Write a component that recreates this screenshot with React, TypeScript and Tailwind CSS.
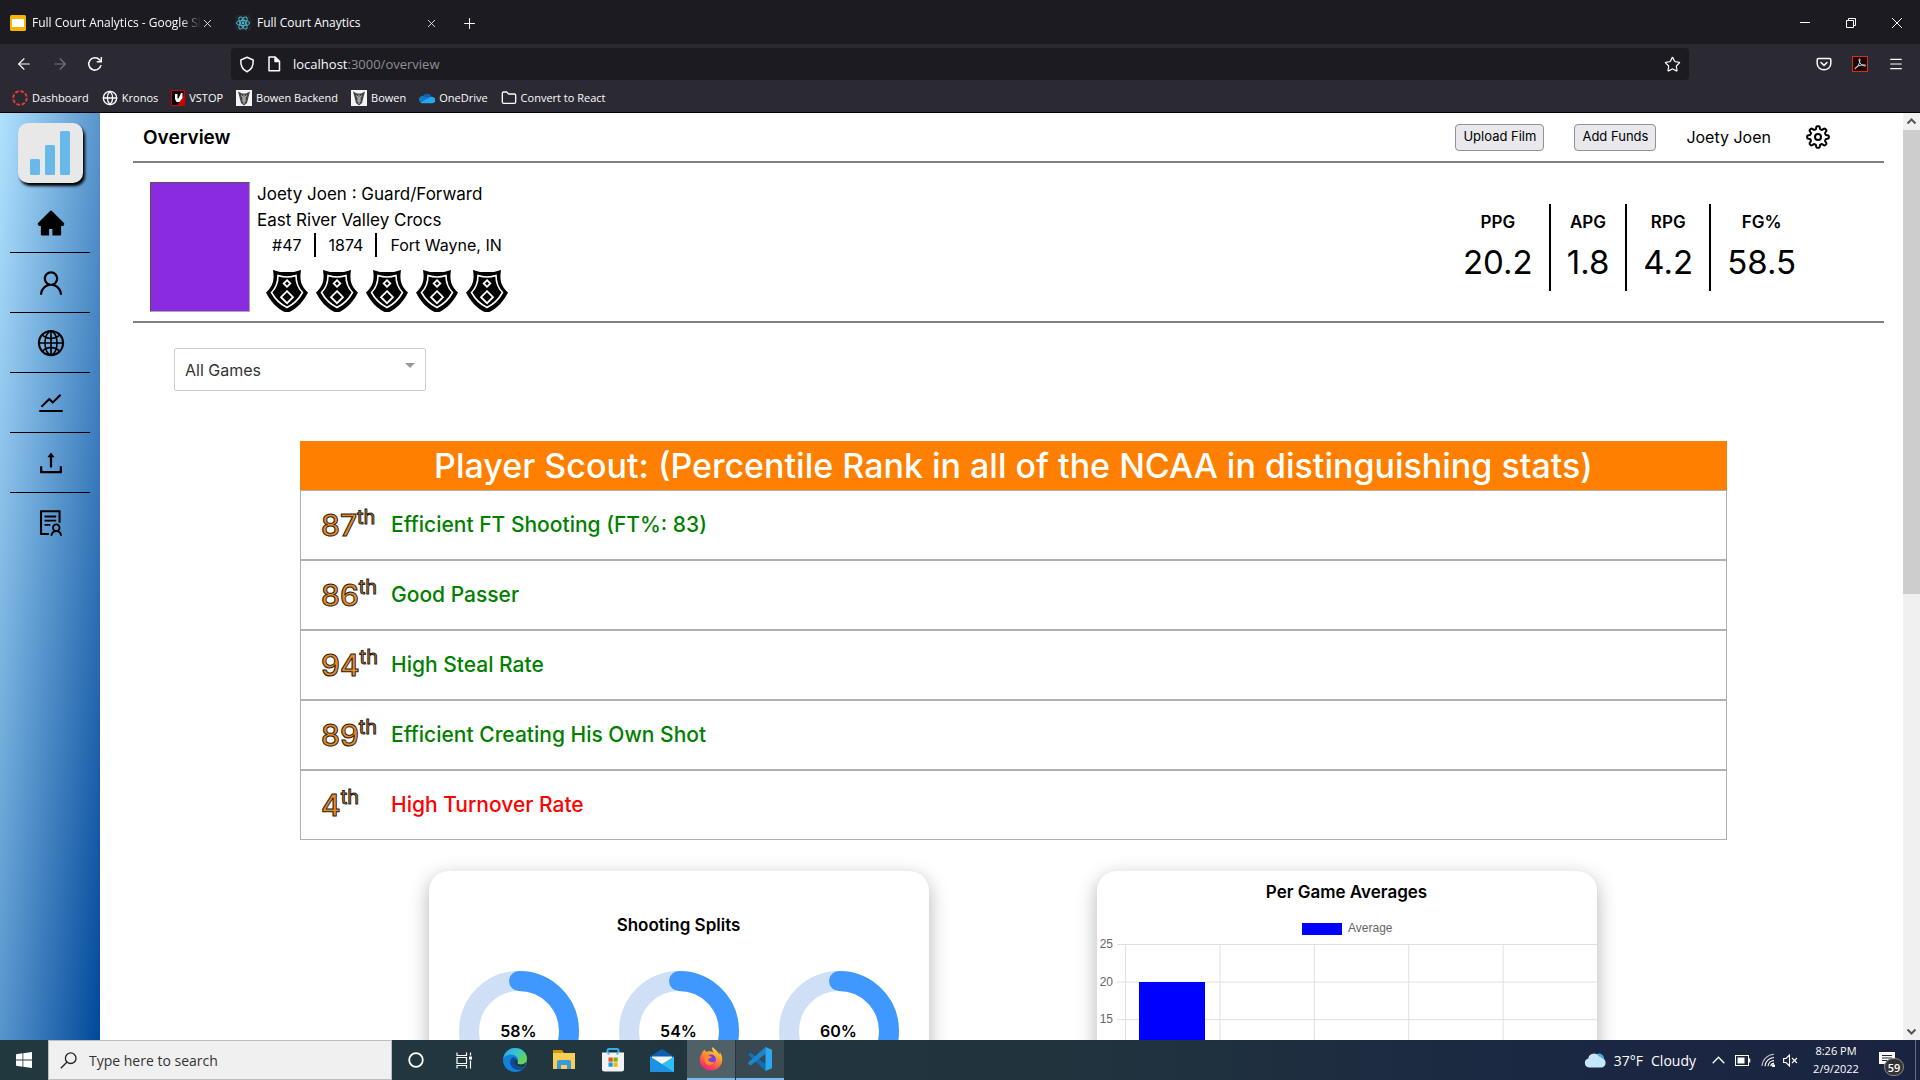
import React from "react";
import {
  AiFillHome,
  AiOutlineUser,
  AiOutlineGlobal,
  AiOutlineStock,
  AiOutlineUpload,
  AiOutlineSolution,
} from "react-icons/ai";
import { ArrowLeft, ArrowRight, X, Plus, Globe, Folder, Star, Menu } from "lucide-react";

/* ---------- Browser chrome icons ---------- */

const SlidesIcon = () => (
  <svg width="16" height="16" viewBox="0 0 16 16" className="shrink-0">
    <rect width="16" height="16" rx="1.5" fill="#f5b400" />
    <rect x="2" y="4" width="12" height="8" fill="#fff" />
  </svg>
);

const ReactLogo = () => (
  <svg width="16" height="16" viewBox="0 0 16 16" className="shrink-0">
    <rect width="16" height="16" rx="2" fill="#20272b" />
    <g fill="none" stroke="#4fb3ca" strokeWidth="1">
      <ellipse cx="8" cy="8" rx="6.6" ry="2.6" />
      <ellipse cx="8" cy="8" rx="6.6" ry="2.6" transform="rotate(60 8 8)" />
      <ellipse cx="8" cy="8" rx="6.6" ry="2.6" transform="rotate(120 8 8)" />
    </g>
    <circle cx="8" cy="8" r="1.4" fill="#4fb3ca" />
  </svg>
);

const ReloadIcon = () => (
  <svg width="16" height="16" viewBox="0 0 16 16" fill="none" stroke="currentColor" strokeWidth="1.5">
    <path d="M14 9.2A6.2 6.2 0 1 1 12.6 3.8L14 5.4" />
    <path d="M14.3 1v4.7H9.8" />
  </svg>
);

const ShieldIcon = () => (
  <svg width="16" height="17" viewBox="0 0 16 17" fill="none" stroke="currentColor" strokeWidth="1.5" strokeLinejoin="round">
    <path d="M8 1.2 14.2 4c.3 5.400-1.700 9.700-6.200 11.800C3.500 13.700 1.500 9.400 1.800 4Z" />
  </svg>
);

const PageIcon = () => (
  <svg width="14" height="16" viewBox="0 0 14 16" fill="none" stroke="currentColor" strokeWidth="1.5" strokeLinejoin="round">
    <path d="M2 1h6.200L12.500 5.300V14.800H2Z" />
    <path d="M8 1v4.500h4.500" fill="currentColor" />
  </svg>
);

const PocketIcon = () => (
  <svg width="16" height="16" viewBox="0 0 16 16" fill="none" stroke="currentColor" strokeWidth="1.500" strokeLinecap="round" strokeLinejoin="round">
    <path d="M2.500 2.500h11a1.300 1.300 0 0 1 1.300 1.300V7.500a6.800 6.300 0 0 1-13.600 0V3.800a1.300 1.300 0 0 1 1.300-1.300Z" />
    <path d="m5 6.500 3 2.900 3-2.900" />
  </svg>
);

const AcrobatIcon = () => (
  <svg width="16" height="16" viewBox="0 0 16 16">
    <rect x=".5" y=".5" width="15" height="15" fill="#1a0404" stroke="#e02a10" />
    <path d="M3 13c2-1 5-6 5-9.500 0-1-1.200-1-1 .3C7.400 7 10 10 13 10c1.200-.2.500-1.300-1.500-1.200C8.500 9 5 10 3.200 12.200Z" fill="none" stroke="#ddd" strokeWidth="1" />
  </svg>
);

const CanvasIcon = () => (
  <svg width="16" height="16" viewBox="0 0 16 16" className="shrink-0">
    <circle cx="8" cy="8" r="6.800" fill="none" stroke="#e03c31" strokeWidth="2" strokeDasharray="3.700 1.640" />
  </svg>
);

const VstopIcon = () => (
  <svg width="14" height="16" viewBox="0 0 14 16" className="shrink-0">
    <rect width="14" height="16" fill="#c00" />
    <path d="M1 1h11.500v4L7 15H1Z" fill="#000" />
    <path d="M4 4h2.500v4.500h1L10 3h1.500v5L8.500 12H5.500L4 9Z" fill="#fff" />
  </svg>
);

const BowenIcon = () => (
  <svg width="16" height="16" viewBox="0 0 16 16" className="shrink-0">
    <rect width="16" height="16" fill="#f4f4f4" />
    <path d="M2 1.500 6 3.500h4L14 1.500 12.500 7 11 13 8 15.500 5 13 3.500 7Z" fill="#444" />
    <path d="M5 5.500 7 7v5M11 5.500 9 7v5M8 4.500V14" stroke="#ccc" strokeWidth=".9" fill="none" />
  </svg>
);

const OneDriveIcon = () => (
  <svg width="16" height="16" viewBox="0 0 16 16" className="shrink-0">
    <path d="M3.500 6.500A5 4.600 0 0 1 12.300 6L8 10Z" fill="#0a63b8" />
    <path d="M3.500 6A3.500 3.500 0 0 0 1 12l9-4Z" fill="#1479d0" />
    <path d="M1.200 12.200A3 3 0 0 0 3.400 13.200H13a3 3 0 0 0 .5-6.200c-1.500-.5-3 .2-3.500.8Z" fill="#28a8ea" />
  </svg>
);

/* ---------- App icons ---------- */

const gearPath =
  Array.from({ length: 160 }, (_, i) => {
    const a = (i / 160) * Math.PI * 2;
    const r = 9.4 + 1.5 * Math.tanh(2.2 * Math.cos(8 * a));
    return `${i ? "L" : "M"}${(12 + r * Math.cos(a)).toFixed(2)} ${(12 + r * Math.sin(a)).toFixed(2)}`;
  }).join("") + "Z";

const GearIcon = () => (
  <svg width="24" height="24" viewBox="0 0 24 24" fill="none" stroke="#000" strokeWidth="2" strokeLinejoin="round">
    <path d={gearPath} />
    <circle cx="12" cy="12" r="3" />
  </svg>
);

const BarsLogo = () => (
  <svg width="65" height="60" viewBox="0 0 65 60">
    <g fill="#68b9ea">
      <rect x="12" y="36" width="10" height="16" rx="1.500" />
      <rect x="27" y="22" width="10" height="30" rx="1.500" />
      <rect x="42" y="8" width="10" height="44" rx="1.500" />
    </g>
  </svg>
);

const Badge = () => (
  <svg width="42" height="42" viewBox="0 0 42 42">
    <path d="M7 0 14 2h14l7-2-.5 4C34 12 36 17 42 22.500 38 31 31 38 24.500 41.500Q21 43 17.500 41.500C11 38 4 31 0 22.500 6 17 8 12 7.500 4Z" fill="#000" />
    <path d="M12 5.500Q21 8.500 30 5.500 30 16 36.500 22.500 31 32.500 21 37.500 11 32.500 5.500 22.500 12 16 12 5.500Z" fill="none" stroke="#fff" strokeWidth="1.600" />
    <path d="m21 10.200 3.300 3.300-3.300 3.300-3.300-3.300Z" fill="none" stroke="#fff" strokeWidth="1.800" />
    <path d="m21 21.200 6 6-6 6-6-6Z" fill="none" stroke="#fff" strokeWidth="1.800" />
  </svg>
);

/* ---------- Taskbar icons ---------- */

const WindowsIcon = () => (
  <svg width="16" height="16" viewBox="0 0 16 16" fill="#fff">
    <path d="M0 2.200 6.500 1.300v6.300H0ZM7.300 1.200 16 0v7.600H7.300ZM0 8.400h6.500v6.300L0 13.800ZM7.300 8.400H16V16l-8.700-1.200Z" />
  </svg>
);

const SearchIcon = () => (
  <svg width="17" height="17" viewBox="0 0 17 17" fill="none" stroke="#222" strokeWidth="1.300" className="shrink-0">
    <circle cx="10.700" cy="6.200" r="5.300" />
    <path d="M7 10 .8 16.200" />
  </svg>
);

const CortanaIcon = () => (
  <svg width="16" height="16" viewBox="0 0 16 16" fill="none" stroke="#fff" strokeWidth="1.800">
    <circle cx="8" cy="8" r="6.800" />
  </svg>
);

const TaskViewIcon = () => (
  <svg width="17" height="17" viewBox="0 0 17 17" fill="none" stroke="#fff" strokeWidth="1.200">
    <path d="M1 .5V3.500H10.500V.5M1 16.500V13.500H10.500V16.500M1 5.500H10.500V11.500H1ZM14.500 .5V3.500M14.500 8.500V16.500" />
    <rect x="13" y="4.500" width="3" height="3" fill="#fff" stroke="none" />
  </svg>
);

const EdgeIcon = () => (
  <svg width="24" height="24" viewBox="0 0 24 24">
    <defs>
      <linearGradient id="edgeTop" x1="0" y1="0" x2="1" y2=".6">
        <stop offset="0" stopColor="#2aa7e8" />
        <stop offset=".5" stopColor="#33c3d6" />
        <stop offset="1" stopColor="#6ad648" />
      </linearGradient>
    </defs>
    <circle cx="12" cy="12" r="12" fill="#1382d6" />
    <path d="M.2 10.500C1.500 4 6.500 0 12 0c7 0 12 5 12 10.500 0 4-3 6-6 6-2.500 0-4-1-3.500-2 1.500-2.500.5-6-3.500-7.500C7 5.500 2 7 .2 10.500Z" fill="url(#edgeTop)" />
    <path d="M9.500 9.500C5.500 12 6 20 14.500 22c3 .5 5.500-1 7.300-3C18 20.500 12 19 11 14.500c-.3-1.500.5-3 2-3.500-1-1.500-2-2-3.500-1.500Z" fill="#0c4a9c" />
    <path d="M14.500 14.500c-.5 1 1 2 3.500 2 2 0 4-1 5-2.500-.3 2-1 3.800-2 5C16 20 12 17.500 11.200 15c-.3-2 .8-3.500 1.800-4 1 1 2 2 1.500 3.500Z" fill="#22363d" />
  </svg>
);

const ExplorerIcon = () => (
  <svg width="22" height="20" viewBox="0 0 22 20">
    <path d="M0 1h9l2 2h11v16H0Z" fill="#f8cf55" />
    <path d="M0 0h9l1.500 3H0Z" fill="#d9930b" />
    <path d="M4 19v-7q0-2 2-2h10q2 0 2 2v7h-4v-4H8v4Z" fill="#3e98dc" />
  </svg>
);

const StoreIcon = () => (
  <svg width="24" height="24" viewBox="0 0 24 24">
    <path d="M6.500 6V2.500Q6.500 1 8 1h8q1.500 0 1.500 1.500V6" fill="none" stroke="#2bb4ee" strokeWidth="2" />
    <path d="M1 4.500h22V21q0 2.500-2.500 2.500h-17Q1 23.500 1 21Z" fill="#f2f2f2" />
    <path d="M6.500 4.500v2h2v-2ZM15.500 4.500v2h2v-2Z" fill="#2bb4ee" />
    <rect x="7.500" y="9.500" width="4.200" height="4.200" fill="#f04e1f" />
    <rect x="12.500" y="9.500" width="4.200" height="4.200" fill="#7cb700" />
    <rect x="7.500" y="14.500" width="4.200" height="4.200" fill="#0f9fe8" />
    <rect x="12.500" y="14.500" width="4.200" height="4.200" fill="#fcb400" />
  </svg>
);

const MailIcon = () => (
  <svg width="24" height="23" viewBox="0 0 24 23">
    <path d="M0 7.500 12 0l12 7.500v4H0Z" fill="#0f5fb0" />
    <path d="M2 7.500h20v6l-10 5-10-5Z" fill="#f6f6f6" />
    <path d="M0 7.500 12 15l12-7.500V23H0Z" fill="#2fc0f5" />
    <path d="M0 7.500 24 23H0Z" fill="#1b93e0" />
  </svg>
);

const FirefoxIcon = () => (
  <svg width="24" height="24" viewBox="0 0 24 24">
    <defs>
      <linearGradient id="foxBody" x1=".8" y1="0" x2=".3" y2="1">
        <stop offset="0" stopColor="#ffe14d" />
        <stop offset=".4" stopColor="#ff9a2b" />
        <stop offset=".75" stopColor="#ff4a50" />
        <stop offset="1" stopColor="#e81e8c" />
      </linearGradient>
    </defs>
    <path d="M13.500 0c-1 2 0 4 1.500 5.500C12 4 9 4 7.500 5 6.500 4.500 6 3.500 6 2.500 4 4 2.500 6 2.200 8 .8 10 .5 12.500 1 15c1.200 5 5.500 8.500 11 8.500 6.500 0 11.300-5 11.300-11 0-3-1-5.500-2.800-7.500.2 1 .2 2-.2 2.500C19 4.500 16 2.500 13.500 0Z" fill="url(#foxBody)" />
    <circle cx="12" cy="12.500" r="5" fill="#7a3fe0" />
    <path d="M5.500 9c2-1.500 4-1 5.500 0l2 .8c-1 1.700-3 1.500-4 2.200.5 3 4 4 7 2.500-1.500 3.500-6 4.500-8.500 2.500C5.500 15 4.800 12 5.500 9Z" fill="#ff8a26" />
  </svg>
);

const CodeIcon = () => (
  <svg width="24" height="24" viewBox="0 0 24 24">
    <path d="M17.500 24 1.200 8.700.2 7.600 2 5.800 3.300 6 18 17.500Z" fill="#0f6fb8" />
    <path d="M17.500 0 .2 15.500v1L2 18.200 3.300 18 18 6.500Z" fill="#1a86d0" />
    <path d="M17.500 0 24 2.800V21.200L17.500 24V0Z" fill="#2aa9f2" />
  </svg>
);

const CloudIcon = () => (
  <svg width="22" height="16" viewBox="0 0 22 16">
    <path d="M13 2a5 5 0 0 1 7 5L21 11 10 10Z" fill="#4fa8e0" />
    <path d="M5 15.500a4.600 4.600 0 0 1-.8-9A5.800 5.800 0 0 1 15 4.600a5 5 0 0 1 3 1.600 4.800 4.800 0 0 1 0 9.300Z" fill="#c3e6fa" />
  </svg>
);

const TrayUp = () => (
  <svg width="13" height="8" viewBox="0 0 13 8" fill="none" stroke="#fff" strokeWidth="1.300">
    <path d="M.7 7.200 6.500 1.300l5.800 5.900" />
  </svg>
);

const BatteryIcon = () => (
  <svg width="16" height="11" viewBox="0 0 16 11" fill="none" stroke="#fff">
    <rect x=".5" y=".5" width="13" height="10" />
    <rect x="2.500" y="2.500" width="7" height="6" fill="#fff" stroke="none" />
    <path d="M14.500 3.500v4" strokeWidth="1.500" />
  </svg>
);

const WifiIcon = () => (
  <svg width="14" height="14" viewBox="0 0 14 14" fill="none" stroke="#fff" strokeWidth="1.100">
    <path d="M1 13A12.500 12.500 0 0 1 13 1.200" opacity=".7" />
    <path d="M4 13.200A9.300 9.300 0 0 1 13 4.500M7 13.200A6.200 6.200 0 0 1 13 7.600M9.700 13.200A3.500 3.500 0 0 1 13 10.400" />
    <circle cx="12.500" cy="12.800" r="1" fill="#fff" />
  </svg>
);

const MuteIcon = () => (
  <svg width="15" height="13" viewBox="0 0 15 13" fill="none" stroke="#fff" strokeWidth="1.100">
    <path d="M.6 4.500H3L6.500 1v11L3 8.500H.6Z" />
    <path d="m9 4 5 5M14 4 9 9" />
  </svg>
);

/* ---------- Data ---------- */

const bookmarks = [
  { label: "Dashboard", icon: <CanvasIcon /> },
  { label: "Kronos", icon: <Globe size={16} strokeWidth={2} className="shrink-0" /> },
  { label: "VSTOP", icon: <VstopIcon /> },
  { label: "Bowen Backend", icon: <BowenIcon /> },
  { label: "Bowen", icon: <BowenIcon /> },
  { label: "OneDrive", icon: <OneDriveIcon /> },
  { label: "Convert to React", icon: <Folder size={16} strokeWidth={2} className="shrink-0" /> },
];

const navItems = [
  { label: "Home", Icon: AiFillHome },
  { label: "Profile", Icon: AiOutlineUser },
  { label: "League", Icon: AiOutlineGlobal },
  { label: "Trends", Icon: AiOutlineStock },
  { label: "Upload", Icon: AiOutlineUpload },
  { label: "Reports", Icon: AiOutlineSolution },
];

const stats = [
  ["PPG", "20.2"],
  ["APG", "1.8"],
  ["RPG", "4.2"],
  ["FG%", "58.5"],
];

const traits = [
  { rank: 87, text: "Efficient FT Shooting (FT%: 83)", good: true },
  { rank: 86, text: "Good Passer", good: true },
  { rank: 94, text: "High Steal Rate", good: true },
  { rank: 89, text: "Efficient Creating His Own Shot", good: true },
  { rank: 4, text: "High Turnover Rate", good: false },
];

/* ---------- Sections ---------- */

function BrowserChrome() {
  return (
    <header className="shrink-0 border-b border-black bg-[#2b2a33] font-['Open_Sans',sans-serif] text-[#fbfbfe]">
      <div className="flex h-11 items-center bg-[#1c1b22] pt-0.5 text-xs">
        <div className="flex w-[225px] items-center pl-[10px]">
          <SlidesIcon />
          <span className="ml-[6px] w-[169px] overflow-hidden whitespace-nowrap [mask-image:linear-gradient(to_right,#000_88%,transparent)]">
            Full Court Analytics - Google Slides
          </span>
          <button aria-label="Close tab">
            <X size={13} strokeWidth={1.5} />
          </button>
        </div>
        <div className="flex w-[213px] items-center gap-[6px] pl-[10px]">
          <ReactLogo />
          <span className="flex-1 whitespace-nowrap">Full Court Anaytics</span>
          <button aria-label="Close tab">
            <X size={13} strokeWidth={1.5} />
          </button>
        </div>
        <button aria-label="New tab" className="ml-[23px]">
          <Plus size={17} strokeWidth={1.5} />
        </button>
        <div className="ml-auto flex items-center gap-9 pr-[18px]">
          <button aria-label="Minimize">
            <svg width="10" height="10" viewBox="0 0 10 10" stroke="#fff"><path d="M0 4.500h10" /></svg>
          </button>
          <button aria-label="Restore">
            <svg width="10" height="10" viewBox="0 0 10 10" fill="none" stroke="#fff"><path d="M.5 2.500h7v7h-7ZM2.500 2.500v-2h7v7h-2" /></svg>
          </button>
          <button aria-label="Close">
            <svg width="10" height="10" viewBox="0 0 10 10" stroke="#fff"><path d="m0 0 10 10M10 0 0 10" /></svg>
          </button>
        </div>
      </div>
      <div className="flex h-10 items-center">
        <div className="flex w-[231px] items-center gap-[18px] pl-[15px]">
          <button aria-label="Back"><ArrowLeft size={18} strokeWidth={1.5} /></button>
          <button aria-label="Forward" className="text-[#77767e]"><ArrowRight size={18} strokeWidth={1.5} /></button>
          <button aria-label="Reload"><ReloadIcon /></button>
        </div>
        <div className="flex h-8 flex-1 items-center rounded-[4px] bg-[#1c1b22] px-2">
          <ShieldIcon />
          <span className="mr-3 ml-3"><PageIcon /></span>
          <a href="#overview" className="flex-1 pt-0.5 text-[13px] text-[#8f8e98]">
            <span className="text-[#fbfbfe]">localhost</span>:3000/overview
          </a>
          <button aria-label="Bookmark this page"><Star size={17} strokeWidth={1.7} /></button>
        </div>
        <div className="flex w-[231px] items-center justify-end gap-5 pr-4">
          <button aria-label="Pocket"><PocketIcon /></button>
          <button aria-label="Acrobat"><AcrobatIcon /></button>
          <button aria-label="Menu"><Menu size={16} strokeWidth={1.7} /></button>
        </div>
      </div>
      <nav className="flex h-7 items-center gap-[13px] pl-3 text-[11px]">
        {bookmarks.map((b) => (
          <a key={b.label} href="#bookmark" className="flex items-center gap-1 whitespace-nowrap">
            {b.icon}
            {b.label}
          </a>
        ))}
      </nav>
    </header>
  );
}

function Sidebar() {
  return (
    <aside className="flex w-[100px] shrink-0 flex-col items-center bg-[linear-gradient(to_bottom_right,#b0e2ff,#00489a)] pt-[10px]">
      <div className="rounded-[10px] bg-[#e8e8e8] shadow-[2px_3px_3px_#000]">
        <BarsLogo />
      </div>
      <nav className="mt-[10px] flex w-20 flex-col">
        {navItems.map(({ label, Icon }) => (
          <a
            key={label}
            href={`#${label.toLowerCase()}`}
            aria-label={label}
            className="flex h-[60px] items-center justify-center border-b border-black pl-0.5 last:border-b-0"
          >
            <Icon size={30} color="#000" />
          </a>
        ))}
      </nav>
    </aside>
  );
}

function Profile() {
  return (
    <section className="flex h-[160px] items-start border-b-2 border-[#808080] pl-[17px]">
      <div className="mt-[19px] h-[130px] w-[100px] border border-t-[#555] border-r-[#aaa] border-b-[#aaa] border-l-[#555] bg-[#8a2be2]" />
      <div className="mt-[18px] ml-[7px]">
        <p className="text-[17px] leading-[26px]">Joety Joen : Guard/Forward</p>
        <p className="text-[17px] leading-[26px]">East River Valley Crocs</p>
        <div className="ml-[2px] flex text-base leading-6">
          <span className="border-r-2 border-black pr-3 pl-[13px]">#47</span>
          <span className="border-r-2 border-black pr-3 pl-[13px]">1874</span>
          <span className="pl-[13px]">Fort Wayne, IN</span>
        </div>
        <div className="mt-[13px] ml-[9px] flex gap-2">
          {[1, 2, 3, 4, 5].map((n) => (
            <Badge key={n} />
          ))}
        </div>
      </div>
      <dl className="mt-[41px] mr-[72px] ml-auto flex divide-x-2 divide-black text-center">
        {stats.map(([label, value]) => (
          <div key={label} className="flex h-[87px] flex-col px-4 pt-1">
            <dt className="text-[17px] leading-7 font-semibold">{label}</dt>
            <dd className="text-[33px] leading-[52px]">{value}</dd>
          </div>
        ))}
      </dl>
    </section>
  );
}

function ScoutTable() {
  return (
    <table className="mt-[50px] w-full border-separate border-spacing-0">
      <thead>
        <tr>
          <th colSpan={2} className="h-[49px] bg-[#ff8000] p-0 text-[34px] leading-[49px] font-medium whitespace-nowrap text-white">
            Player Scout: (Percentile Rank in all of the NCAA in distinguishing stats)
          </th>
        </tr>
      </thead>
      <tbody>
        {traits.map((t) => (
          <tr key={t.rank} className="h-[70px]">
            <td className="w-[91px] border-y border-l border-[#b0b0b0] p-0 pl-5">
              <div className="flex items-start text-[#f08a1a] [-webkit-text-stroke:1px_#222]">
                <span className="text-[30px] leading-9 font-medium">{t.rank}</span>
                <span className="text-xl leading-5">th</span>
              </div>
            </td>
            <td
              className={
                t.good
                  ? "border-y border-r border-[#b0b0b0] p-0 text-[21px] font-medium text-[#008000]"
                  : "border-y border-r border-[#b0b0b0] p-0 text-[21px] font-medium text-[#ff0000]"
              }
            >
              {t.text}
            </td>
          </tr>
        ))}
      </tbody>
    </table>
  );
}

function Ring({ value }: { value: number }) {
  const c = 2 * Math.PI * 50;
  return (
    <div className="grid place-items-center">
      <svg width="120" height="120" viewBox="0 0 120 120" className="col-start-1 row-start-1 -rotate-90" fill="none" strokeWidth="20">
        <circle cx="60" cy="60" r="50" stroke="#cfe0f6" />
        <circle cx="60" cy="60" r="50" stroke="#3e98ff" strokeLinecap="round" strokeDasharray={`${(c * value) / 100} ${c}`} />
      </svg>
      <span className="col-start-1 row-start-1 text-base leading-5 font-semibold">{value}%</span>
    </div>
  );
}

function AveragesChart() {
  const rows = [25, 20, 15, 10, 5, 0];
  const cols = [0, 1, 2, 3, 4, 5];
  return (
    <svg viewBox="0 0 500 240" className="w-full font-['Liberation_Sans',sans-serif] text-xs" fill="#666">
      <rect x="205" y="6" width="40" height="12" fill="#0000ff" />
      <text x="251" y="15">Average</text>
      {rows.map((v, i) => (
        <g key={v}>
          <path d={`M20 ${27.5 + i * 37.6}H500`} stroke="#e0e0e0" />
          <text x="16" y={31 + i * 37.6} textAnchor="end">{v}</text>
        </g>
      ))}
      {cols.map((n) => (
        <path key={n} d={`M${28.5 + n * 94.4} 27V226`} stroke="#e0e0e0" />
      ))}
      <rect x="42" y="65" width="66" height="151" fill="#0000ff" />
    </svg>
  );
}

function Scrollbar() {
  return (
    <div className="flex w-[17px] shrink-0 flex-col bg-[#f0f0f0]" aria-hidden="true">
      <svg width="17" height="17" viewBox="0 0 17 17" fill="none" stroke="#555" strokeWidth="2"><path d="m4.500 10.500 4-4 4 4" /></svg>
      <div className="h-1/2 bg-[#cdcdcd]" />
      <svg width="17" height="17" viewBox="0 0 17 17" fill="none" stroke="#555" strokeWidth="2" className="mt-auto"><path d="m4.500 6.500 4 4 4-4" /></svg>
    </div>
  );
}

function Taskbar() {
  return (
    <footer className="flex h-10 shrink-0 items-stretch bg-[linear-gradient(to_right,#22383f,#21343e_55%,#1b2842_80%,#1a2440)] font-['Open_Sans',sans-serif] text-white">
      <button aria-label="Start" className="flex w-12 items-center justify-center"><WindowsIcon /></button>
      <label className="flex w-[344px] items-center gap-3 border border-[#bdbdbd] bg-[#f0f0f0] pl-[11px]">
        <SearchIcon />
        <input
          type="text"
          aria-label="Search"
          placeholder="Type here to search"
          className="w-full bg-transparent pt-0.5 text-sm text-[#333] outline-none placeholder:text-[#333]"
        />
      </label>
      <button aria-label="Cortana" className="flex w-12 items-center justify-center"><CortanaIcon /></button>
      <button aria-label="Task view" className="mr-[3px] flex w-12 items-center justify-center"><TaskViewIcon /></button>
      <div className="flex gap-px">
        <button aria-label="Edge" className="flex w-12 items-center justify-center"><EdgeIcon /></button>
        <button aria-label="File Explorer" className="flex w-12 items-center justify-center"><ExplorerIcon /></button>
        <button aria-label="Store" className="flex w-12 items-center justify-center"><StoreIcon /></button>
        <button aria-label="Mail" className="flex w-12 items-center justify-center"><MailIcon /></button>
        <button aria-label="Firefox" className="flex w-12 items-center justify-center border-b-2 border-[#76b9ed] bg-[#4f6067]"><FirefoxIcon /></button>
        <button aria-label="Visual Studio Code" className="flex w-12 items-center justify-center border-b-2 border-[#76b9ed] bg-[#394951]"><CodeIcon /></button>
      </div>
      <div className="ml-auto flex items-center">
        <CloudIcon />
        <span className="ml-2 pt-0.5 text-sm">37°F</span>
        <span className="mr-4 ml-2 pt-0.5 text-sm">Cloudy</span>
        <TrayUp />
        <span className="ml-[10px]"><BatteryIcon /></span>
        <span className="ml-[10px]"><WifiIcon /></span>
        <span className="mr-[13px] ml-2"><MuteIcon /></span>
        <div className="flex w-[50px] flex-col items-center text-[11px] leading-[18px] whitespace-nowrap">
          <span>8:26 PM</span>
          <span>2/9/2022</span>
        </div>
        <div className="relative ml-[18px] h-full w-[37px] border-r border-[#64708a]">
          <svg width="16" height="16" viewBox="0 0 16 16" className="mt-3">
            <path d="M0 0h16v12H8v3l-3-3H0Z" fill="#fff" />
            <path d="M3 3.500h10M3 6h10M3 8.500h6" stroke="#1a2440" />
          </svg>
          <span className="absolute top-[18px] left-[5px] flex h-[18px] w-5 items-center justify-center rounded-full border border-[#8b8b8b] bg-[#333] text-[11px] leading-none font-semibold">
            59
          </span>
        </div>
        <div className="w-1" />
      </div>
    </footer>
  );
}

export default function App() {
  return (
    <div className="flex h-screen flex-col overflow-hidden bg-white font-['Inter',sans-serif] text-black">
      <BrowserChrome />
      <div className="flex min-h-0 flex-1">
        <Sidebar />
        <main className="min-w-0 flex-1 overflow-hidden">
          <div className="pr-[19px] pl-[33px]">
            <div className="flex h-[50px] items-center border-b-2 border-[#808080] pr-[54px] pl-[10px]">
              <h1 className="mr-auto pt-0.5 text-[19px] leading-6 font-semibold">Overview</h1>
              <button className="mr-[30px] h-[27px] rounded-[4px] border border-[#8f8f9d] bg-[#e9e9ed] px-[7px] text-[13px]">Upload Film</button>
              <button className="mr-[30px] h-[27px] rounded-[4px] border border-[#8f8f9d] bg-[#e9e9ed] px-[7px] text-[13px]">Add Funds</button>
              <span className="mr-[35px] text-base">Joety Joen</span>
              <button aria-label="Settings"><GearIcon /></button>
            </div>
            <Profile />
          </div>
          <div className="relative mt-[25px] ml-[74px] w-[252px]">
            <select
              aria-label="Games"
              className="h-[43px] w-full appearance-none rounded-[2px] border border-[#ccc] bg-white px-[10px] text-base text-[#333]"
            >
              <option>All Games</option>
            </select>
            <svg width="10" height="5" viewBox="0 0 10 5" className="pointer-events-none absolute top-[15px] right-[11px]" fill="#999">
              <path d="M0 0h10L5 5Z" />
            </svg>
          </div>
          <div className="pr-[176px] pl-[200px]">
            <ScoutTable />
            <div className="mt-[31px] flex justify-center gap-[168px] pr-0.5">
              <section className="h-[360px] w-[500px] rounded-[20px] pt-10 shadow-[0_6px_20px_rgba(0,0,0,0.3)]">
                <h2 className="text-center text-[17px] leading-7 font-semibold">Shooting Splits</h2>
                <div className="mt-8 flex justify-center gap-10">
                  <Ring value={58} />
                  <Ring value={54} />
                  <Ring value={60} />
                </div>
              </section>
              <section className="h-[360px] w-[500px] rounded-[20px] pt-[7px] shadow-[0_6px_20px_rgba(0,0,0,0.3)]">
                <h2 className="mb-[11px] text-center text-[17px] leading-7 font-semibold">Per Game Averages</h2>
                <AveragesChart />
              </section>
            </div>
          </div>
        </main>
        <Scrollbar />
      </div>
      <Taskbar />
    </div>
  );
}
